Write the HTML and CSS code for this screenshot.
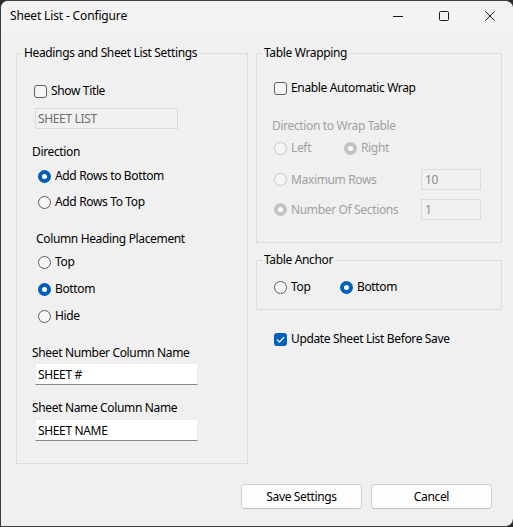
FILE: index.html
```html
<!DOCTYPE html>
<html>
<head>
<meta charset="utf-8">
<link rel="stylesheet" href="styles.css">
</head>
<body>
<div class="window">
  <header class="titlebar">
    <span class="title">Sheet List - Configure</span>
    <div class="caption">
      <span class="cbtn"><svg width="10" height="10" viewBox="0 0 10 10"><path d="M0 5.5h10" stroke="#1a1a1a" stroke-width="1"/></svg></span>
      <span class="cbtn"><svg width="10" height="10" viewBox="0 0 10 10"><rect x="0.5" y="0.5" width="9" height="9" rx="1" fill="none" stroke="#1a1a1a" stroke-width="1"/></svg></span>
      <span class="cbtn"><svg width="10" height="10" viewBox="0 0 10 10"><path d="M0.5 0.5l9 9M9.5 0.5l-9 9" stroke="#1a1a1a" stroke-width="1"/></svg></span>
    </div>
  </header>
  <main class="content">
    <section class="group group-left">
      <div class="group-title">Headings and Sheet List Settings</div>
      <div class="row show-title"><span class="box"></span><span>Show Title</span></div>
      <input class="tb tb-title" value="SHEET LIST" readonly>
      <div class="lbl dir-lbl">Direction</div>
      <div class="row radio-row r1"><span class="radio on"></span><span>Add Rows to Bottom</span></div>
      <div class="row radio-row r2"><span class="radio"></span><span>Add Rows To Top</span></div>
      <div class="lbl col-lbl">Column Heading Placement</div>
      <div class="row radio-row r3"><span class="radio"></span><span>Top</span></div>
      <div class="row radio-row r4"><span class="radio on"></span><span>Bottom</span></div>
      <div class="row radio-row r4"><span class="radio"></span><span>Hide</span></div>
      <div class="lbl num-lbl">Sheet Number Column Name</div>
      <input class="tb tb-white tb-num" value="SHEET #">
      <div class="lbl name-lbl">Sheet Name Column Name</div>
      <input class="tb tb-white tb-name" value="SHEET NAME">
    </section>
    <div class="col-right">
      <section class="group group-wrap">
        <div class="group-title">Table Wrapping</div>
        <div class="row wrap-check"><span class="box"></span><span>Enable Automatic Wrap</span></div>
        <div class="lbl dis wrap-lbl">Direction to Wrap Table</div>
        <div class="row pair-row dis">
          <div class="row opt-left"><span class="radio dis"></span><span>Left</span></div>
          <div class="row"><span class="radio dis on"></span><span>Right</span></div>
        </div>
        <div class="row field-row dis max-row">
          <div class="row opt-wide"><span class="radio dis"></span><span>Maximum Rows</span></div>
          <input class="tb tb-small" value="10" readonly>
        </div>
        <div class="row field-row dis sec-row">
          <div class="row opt-wide"><span class="radio dis on"></span><span>Number Of Sections</span></div>
          <input class="tb tb-small" value="1" readonly>
        </div>
      </section>
      <section class="group group-anchor">
        <div class="group-title">Table Anchor</div>
        <div class="row pair-row anchor-row">
          <div class="row opt-top"><span class="radio"></span><span>Top</span></div>
          <div class="row"><span class="radio on"></span><span>Bottom</span></div>
        </div>
      </section>
      <div class="row update-row"><span class="box checked"><svg width="13" height="13" viewBox="0 0 13 13"><path d="M3.3 6.8l2.2 2.2 4.3-4.6" fill="none" stroke="#fff" stroke-width="1.2" stroke-linecap="round" stroke-linejoin="round"/></svg></span><span>Update Sheet List Before Save</span></div>
    </div>
  </main>
  <footer class="footer">
    <button class="btn">Save Settings</button>
    <button class="btn">Cancel</button>
  </footer>
</div>
</body>
</html>
```

FILE: styles.css
```css
html, body {
  margin: 0;
  padding: 0;
  background: #2b2b2b;
}
body {
  width: 513px;
  height: 527px;
  overflow: hidden;
  font-family: "Noto Sans", "Open Sans", sans-serif;
  font-size: 12px;
  letter-spacing: -0.35px;
  color: #000;
}
.window {
  box-sizing: border-box;
  width: 513px;
  height: 527px;
  border: 1px solid #3d3d3d;
  border-right: none;
  border-radius: 8px 8px 8px 0;
  background: #f0f0f0;
  display: flex;
  flex-direction: column;
  overflow: hidden;
}
.titlebar {
  height: 30px;
  flex: none;
  background: #f3f3f3;
  display: flex;
  align-items: center;
  justify-content: space-between;
}
.title {
  padding-left: 9px;
  line-height: 16px;
  letter-spacing: -0.15px;
}
.caption {
  display: flex;
  height: 100%;
}
.cbtn {
  width: 46px;
  height: 30px;
  display: flex;
  align-items: center;
  justify-content: center;
}
.cbtn svg { display: block; }

.content {
  display: grid;
  grid-template-columns: 232px 246px;
  column-gap: 8px;
  align-items: start;
  padding: 22px 0 0 15px;
}
.group {
  position: relative;
  box-sizing: border-box;
  border: 1px solid #dcdcdc;
  padding-top: 7px;
}
.group-title {
  position: absolute;
  top: -9px;
  left: 5px;
  padding: 0 2px;
  line-height: 16px;
  background: #f0f0f0;
  white-space: nowrap;
}
.row {
  display: flex;
  align-items: center;
  height: 16px;
  line-height: 16px;
  white-space: nowrap;
}
.lbl {
  height: 16px;
  line-height: 16px;
  white-space: nowrap;
}
.dis { color: #a0a0a0; }

.box {
  box-sizing: border-box;
  width: 13px;
  height: 13px;
  border: 1px solid #5d5d5d;
  border-radius: 3px;
  background: #f6f6f6;
  margin-right: 4px;
  flex: none;
  display: block;
}
.box.checked {
  border: none;
  background: #005fb8;
}
.box svg { display: block; }

.radio {
  box-sizing: border-box;
  width: 13px;
  height: 13px;
  border: 1px solid #5d5d5d;
  border-radius: 50%;
  background: #f6f6f6;
  margin-right: 4px;
  flex: none;
}
.radio.on {
  border: 4px solid #005fb8;
  background: #fff;
}
.radio.dis {
  border-color: #c6c6c6;
}
.radio.dis.on {
  border: 4px solid #c3c3c3;
  background: #fff;
}

.tb {
  box-sizing: border-box;
  display: block;
  height: 21px;
  margin: 0;
  padding: 0 2px;
  font: inherit;
  font-size: 12px;
  letter-spacing: -0.35px;
  border: 1px solid #dadada;
  background: #f0f0f0;
  color: #6d6d6d;
  outline: none;
}
.tb-white {
  background: #fff;
  color: #000;
  border: 1px solid #ececec;
  border-bottom-color: #8a8a8a;
}

/* left group */
.group-left { padding-bottom: 22px; }
.show-title { margin: 22px 0 0 17px; }
.tb-title { margin: 9px 0 0 18px; width: 143px; }
.dir-lbl { margin: 15px 0 0 15px; }
.radio-row.r1 { margin: 8px 0 0 21px; }
.radio-row.r2 { margin: 10px 0 0 21px; }
.col-lbl { margin: 21px 0 0 19px; }
.radio-row.r3 { margin: 7px 0 0 21px; }
.radio-row.r4 { margin: 11px 0 0 21px; }
.num-lbl { margin: 21px 0 0 15px; }
.tb-num { margin: 2px 0 0 18px; width: 163px; height: 22px; }
.name-lbl { margin: 15px 0 0 15px; }
.tb-name { margin: 3px 0 0 18px; width: 163px; height: 22px; }

/* right column */
.col-right {
  display: flex;
  flex-direction: column;
}
.group-wrap { padding-bottom: 22px; }
.wrap-check { margin: 19px 0 0 17px; }
.wrap-lbl { margin: 22px 0 0 15px; }
.pair-row { margin: 6px 0 0 17px; }
.opt-left { width: 70px; }
.field-row { height: 21px; margin-left: 17px; }
.max-row { margin-top: 13px; }
.sec-row { margin-top: 9px; }
.opt-wide { width: 147px; }
.tb-small {
  width: 60px;
  height: 21px;
  color: #8a8a8a;
  padding-left: 3px;
  border-color: #dcdcdc;
}
.group-anchor { margin-top: 17px; padding-bottom: 14px; }
.anchor-row { margin: 11px 0 0 17px; }
.opt-top { width: 66px; }
.update-row { margin: 21px 0 0 18px; }

/* footer */
.footer {
  margin-top: auto;
  display: flex;
  justify-content: flex-end;
  gap: 9px;
  padding: 0 21px 17px 0;
}
.btn {
  box-sizing: border-box;
  width: 121px;
  height: 25px;
  font: inherit;
  font-size: 12px;
  letter-spacing: -0.35px;
  color: #000;
  background: #fdfdfd;
  border: 1px solid #d0d0d0;
  border-bottom-color: #c0c0c0;
  border-radius: 4px;
  padding: 0;
}
```
